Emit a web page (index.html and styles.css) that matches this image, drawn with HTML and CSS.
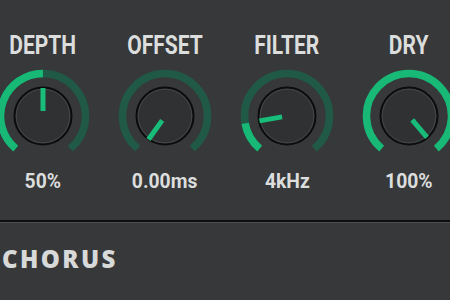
FILE: index.html
```html
<!DOCTYPE html>
<html lang="en">
<head>
<meta charset="utf-8">
<title>Chorus</title>
<link rel="stylesheet" href="styles.css">
</head>
<body>
<div class="panel">
  <div class="knobs">
    <div class="knob">
      <div class="label">DEPTH</div>
      <svg class="dial" width="100" height="100" viewBox="0 0 100 100">
        <path class="track" d="M 22.68 82.56 A 42.5 42.5 0 1 1 77.32 82.56"/>
        <path class="fill" d="M 22.68 82.56 A 42.5 42.5 0 0 1 50 7.5"/>
        <circle class="cap" cx="50" cy="50" r="28.5"/>
        <circle class="rim" cx="50" cy="50" r="26.8"/>
        <line class="pointer" x1="50" y1="45" x2="50" y2="22"/>
      </svg>
      <div class="value">50%</div>
    </div>
    <div class="knob">
      <div class="label">OFFSET</div>
      <svg class="dial" width="100" height="100" viewBox="0 0 100 100">
        <path class="track" d="M 22.68 82.56 A 42.5 42.5 0 1 1 77.32 82.56"/>
        <circle class="cap" cx="50" cy="50" r="28.5"/>
        <circle class="rim" cx="50" cy="50" r="26.8"/>
        <line class="pointer" x1="47.2" y1="54.4" x2="33.5" y2="73.5"/>
      </svg>
      <div class="value">0.00ms</div>
    </div>
    <div class="knob">
      <div class="label">FILTER</div>
      <svg class="dial" width="100" height="100" viewBox="0 0 100 100">
        <path class="track" d="M 22.68 82.56 A 42.5 42.5 0 1 1 77.32 82.56"/>
        <path class="fill" d="M 22.68 82.56 A 42.5 42.5 0 0 1 8.15 57.38"/>
        <circle class="cap" cx="50" cy="50" r="28.5"/>
        <circle class="rim" cx="50" cy="50" r="26.8"/>
        <line class="pointer" x1="45.08" y1="50.87" x2="22.43" y2="54.86"/>
      </svg>
      <div class="value">4kHz</div>
    </div>
    <div class="knob">
      <div class="label">DRY</div>
      <svg class="dial" width="100" height="100" viewBox="0 0 100 100">
        <path class="fill" d="M 22.68 82.56 A 42.5 42.5 0 1 1 77.32 82.56"/>
        <circle class="cap" cx="50" cy="50" r="28.5"/>
        <circle class="rim" cx="50" cy="50" r="26.8"/>
        <line class="pointer" x1="53.21" y1="53.83" x2="68" y2="71.45"/>
      </svg>
      <div class="value">100%</div>
    </div>
  </div>
</div>
<div class="footer">
  <div class="title">CHORUS</div>
</div>
</body>
</html>
```

FILE: styles.css
```css
html, body {
  margin: 0;
  height: 100%;
  overflow: hidden;
  background: #363839;
}
.panel {
  height: 220px;
  border-bottom: 2px solid #0d0e0e;
  box-shadow: 0 1px 0 #4b4d4e;
}
.knobs {
  display: flex;
  margin-left: -18px;
  padding-top: 33px;
}
.knob {
  width: 122px;
  flex: none;
  display: flex;
  flex-direction: column;
  align-items: center;
}
.label {
  font-family: Roboto, sans-serif;
  font-weight: bold;
  font-size: 25px;
  line-height: 25px;
  color: #dcdddd;
  transform: scaleX(0.84);
}
.dial {
  display: block;
  margin-top: 8px;
}
.track {
  fill: none;
  stroke: #205a47;
  stroke-width: 7.5;
}
.fill {
  fill: none;
  stroke: #18b977;
  stroke-width: 7.5;
}
.cap {
  fill: #2f3132;
  stroke: #0b0c0c;
  stroke-width: 2;
}
.rim {
  fill: none;
  stroke: #444748;
  stroke-width: 1;
}
.pointer {
  stroke: #19bd7a;
  stroke-width: 5;
}
.value {
  margin-top: 5px;
  font-family: Roboto, sans-serif;
  font-weight: bold;
  font-size: 21px;
  line-height: 21px;
  color: #dcdddd;
  transform: scaleX(0.92);
}
.footer {
  padding: 25px 0 0 2px;
}
.title {
  font-family: "Open Sans", sans-serif;
  font-weight: 800;
  font-size: 24px;
  line-height: 24px;
  letter-spacing: 2.4px;
  color: #d8d9d9;
}
```
